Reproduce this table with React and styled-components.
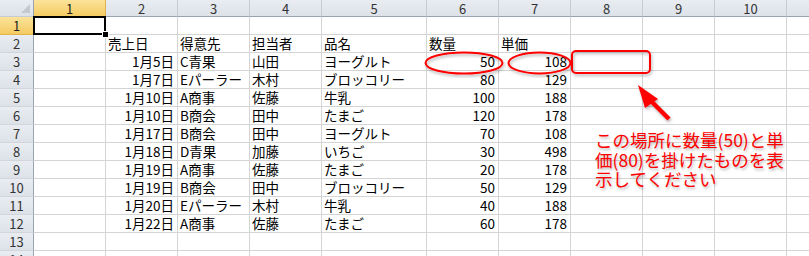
import React from "react";
import styled, { createGlobalStyle, css } from "styled-components";

const GlobalStyle = createGlobalStyle`
    html, body {
        margin: 0;
        padding: 0;
        background: #fff;
        overflow: hidden;
    }
    body {
        font-family: "Noto Sans CJK JP", "DejaVu Sans", sans-serif;
    }
`;

const COLS = [72, 72, 72, 72, 105, 72, 72, 72, 72, 72, 72];
const ROW_COUNT = 14;

const rows = {
    2: ["", "売上日", "得意先", "担当者", "品名", "数量", "単価"],
    3: ["", "1月5日", "C青果", "山田", "ヨーグルト", 50, 108],
    4: ["", "1月7日", "Eパーラー", "木村", "ブロッコリー", 80, 129],
    5: ["", "1月10日", "A商事", "佐藤", "牛乳", 100, 188],
    6: ["", "1月10日", "B商会", "田中", "たまご", 120, 178],
    7: ["", "1月17日", "B商会", "田中", "ヨーグルト", 70, 108],
    8: ["", "1月18日", "D青果", "加藤", "いちご", 30, 498],
    9: ["", "1月19日", "A商事", "佐藤", "たまご", 20, 178],
    10: ["", "1月19日", "B商会", "田中", "ブロッコリー", 50, 129],
    11: ["", "1月20日", "Eパーラー", "木村", "牛乳", 40, 188],
    12: ["", "1月22日", "A商事", "佐藤", "たまご", 60, 178]
};

// dates and numbers sit on the right like in Excel
const isRight = (row, col, value) =>
    row > 2 && (col === 1 || typeof value === "number");

export default function App() {
    return (
        <>
            <GlobalStyle />
            <Sheet>
                <Grid>
                    <Corner>
                        <CornerMark />
                    </Corner>
                    {COLS.map((w, i) => (
                        <ColHead key={i} selected={i === 0}>
                            {i + 1}
                        </ColHead>
                    ))}
                    {Array.from({ length: ROW_COUNT }, (_, r) => {
                        const rowNo = r + 1;
                        const data = rows[rowNo] || [];
                        return (
                            <React.Fragment key={rowNo}>
                                <RowHead selected={rowNo === 1}>{rowNo}</RowHead>
                                {COLS.map((w, c) => {
                                    const value = data[c];
                                    return (
                                        <Cell
                                            key={c}
                                            right={isRight(rowNo, c, value)}
                                        >
                                            {value}
                                        </Cell>
                                    );
                                })}
                            </React.Fragment>
                        );
                    })}
                </Grid>

                <ActiveCell>
                    <FillHandle />
                </ActiveCell>

                <Marks width="809" height="256" viewBox="0 0 809 256">
                    <defs>
                        <filter id="soft" x="-20%" y="-20%" width="140%" height="140%">
                            <feDropShadow dx="1" dy="2" stdDeviation="1.5" floodColor="#000" floodOpacity="0.3" />
                        </filter>
                    </defs>
                    <g filter="url(#soft)" fill="none" stroke="#f00" strokeWidth="2">
                        <ellipse cx="464" cy="63" rx="38.5" ry="10.5" />
                        <ellipse cx="539.5" cy="63" rx="31" ry="10.5" />
                        <rect x="572" y="51" width="78" height="22" rx="4" />
                    </g>
                    <g filter="url(#soft)">
                        <line x1="669" y1="119" x2="648" y2="98" stroke="#f00" strokeWidth="4.5" />
                        <polygon points="638,85 658,99 645,108" fill="#f00" />
                    </g>
                </Marks>

                <Note>
                    この場所に数量(50)と単
                    <br />
                    価(80)を掛けたものを表
                    <br />
                    示してください
                </Note>
            </Sheet>
        </>
    );
}

const Sheet = styled.div`
    position: relative;
    width: 809px;
    height: 256px;
    overflow: hidden;
    background: #fff;
`;

const Grid = styled.div`
    display: grid;
    grid-template-columns: 34px ${COLS.map(w => `${w}px`).join(" ")};
    grid-template-rows: 17px repeat(${ROW_COUNT}, 18px);
    font-size: 13.5px;
    color: #000;
`;

const headBase = css`
    box-sizing: border-box;
    display: flex;
    align-items: center;
    justify-content: center;
    font-family: "Noto Sans CJK JP", sans-serif;
    font-size: 13px;
    color: #333;
    background: linear-gradient(#e9edf2, #dde2e8);
    border-right: 1px solid #c5cbd2;
    border-bottom: 1px solid #c5cbd2;
`;

const selectedHead = css`
    background: linear-gradient(#fbe39a, #f5cb62);
    color: #222;
    border-color: #e0b24a;
`;

const Corner = styled.div`
    ${headBase};
    position: relative;
    border-right-color: #9aa4b0;
`;

const CornerMark = styled.div`
    position: absolute;
    right: 3px;
    bottom: 3px;
    width: 0;
    height: 0;
    border-left: 9px solid transparent;
    border-bottom: 9px solid #c4c9cf;
`;

const ColHead = styled.div`
    ${headBase};
    border-bottom-color: #9aa4b0;
    ${p => p.selected && selectedHead};
    ${p => p.selected && "border-bottom: 1px solid #d6a13c;"}
`;

const RowHead = styled.div`
    ${headBase};
    border-right-color: #9aa4b0;
    border-bottom-color: #d2d6db;
    ${p => p.selected && selectedHead};
    ${p => p.selected && "border-right: 1px solid #d6a13c;"}
`;

const Cell = styled.div`
    box-sizing: border-box;
    display: flex;
    align-items: center;
    justify-content: ${p => (p.right ? "flex-end" : "flex-start")};
    padding: ${p => (p.right ? "0 3px 0 0" : "0 0 0 2px")};
    border-right: 1px solid #d4d4d4;
    border-bottom: 1px solid #d4d4d4;
    white-space: nowrap;
    line-height: 17px;
`;

const ActiveCell = styled.div`
    position: absolute;
    left: 33px;
    top: 16px;
    width: 73px;
    height: 19px;
    box-sizing: border-box;
    border: 2px solid #000;
`;

const FillHandle = styled.div`
    position: absolute;
    right: -5px;
    bottom: -5px;
    width: 5px;
    height: 5px;
    background: #000;
    border: 1px solid #fff;
`;

const Marks = styled.svg`
    position: absolute;
    left: 0;
    top: 0;
    pointer-events: none;
`;

const Note = styled.div`
    position: absolute;
    left: 595px;
    top: 130px;
    font-family: "Noto Sans CJK JP", sans-serif;
    font-size: 17.5px;
    line-height: 19.5px;
    color: #f00;
    white-space: nowrap;
    text-shadow: 1px 2px 3px rgba(0, 0, 0, 0.3);
`;
